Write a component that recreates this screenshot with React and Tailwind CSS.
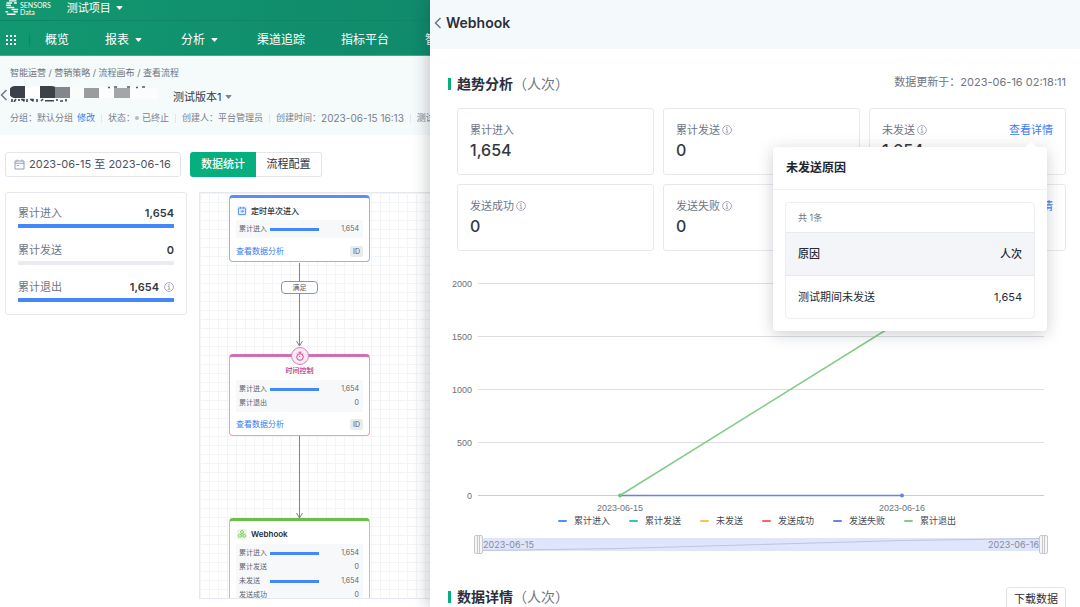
import React from "react";

function Caret({ className }) {
  return (
    <svg viewBox="0 0 8 5" className={`h-[4px] w-[7px] shrink-0 ${className}`} fill="currentColor" aria-hidden="true">
      <path d="M1 0h6c.7 0 .9.5.5 1L4.6 4.4c-.4.4-.8.4-1.2 0L.5 1C.1.5.3 0 1 0z" />
    </svg>
  );
}

function Chevron({ className }) {
  return (
    <svg viewBox="0 0 8 12" className={`h-[12px] w-[8px] shrink-0 ${className}`} fill="none" stroke="currentColor" strokeWidth="1.5" aria-hidden="true">
      <path d="M6.5 1L1.5 6l5 5" />
    </svg>
  );
}

function Info() {
  return (
    <svg viewBox="0 0 20 20" className="h-[10px] w-[10px] shrink-0" fill="none" stroke="#8b92a1" strokeWidth="1.5" aria-hidden="true">
      <circle cx="10" cy="10" r="8.8" />
      <path d="M8 9h2.2v5.5M7.5 14.5h5" />
      <circle cx="10" cy="5.8" r="0.7" fill="#8b92a1" />
    </svg>
  );
}

function Logo() {
  return (
    <svg viewBox="0 0 14 16" className="h-[16px] w-[14px] shrink-0" fill="none" stroke="#fff" strokeLinecap="round" aria-hidden="true">
      <path d="M4.5 .9h6.500" strokeWidth="1.4" />
      <path d="M2 3h4.500M9.500 3h1.800" strokeWidth="1.4" />
      <path d="M1.500 5.200h3.800" strokeWidth="1.5" />
      <path d="M2.200 7.400h6.500" strokeWidth="1.5" />
      <path d="M7.200 9.600h5.300" strokeWidth="1.5" />
      <path d="M1 11.800h1.500M9 11.800h3.300" strokeWidth="1.5" />
      <path d="M2.500 14.200h7.500" strokeWidth="1.5" />
    </svg>
  );
}

const navItems = [
  { label: "概览" },
  { label: "报表", menu: true },
  { label: "分析", menu: true },
  { label: "渠道追踪" },
  { label: "指标平台" },
  { label: "智能运营" },
];

function TopBar() {
  return (
    <header className="bg-linear-to-r from-[#129870] from-0% to-[#108a6b] to-40% text-white">
      <div className="flex h-[21px] items-start border-b border-[#0f8667] pl-[5px]">
        <div className="flex items-center gap-px">
          <Logo />
          <div className="pt-px font-['Lato',sans-serif] text-[7px] leading-[7px]">
            <div>SENSORS</div>
            <div>Data</div>
          </div>
        </div>
        <button type="button" className="ml-[16px] flex items-center gap-[5px] text-[11px] leading-[16px]">
          测试项目
          <Caret />
        </button>
      </div>
      <nav className="flex h-[35px] items-center border-b border-[#3fae8b] pt-[4px] pl-[6px] text-[12px] whitespace-nowrap">
        <button type="button" aria-label="应用" className="grid grid-cols-3 gap-[2px]">
          {Array.from({ length: 9 }, (_, i) => (
            <span key={i} className="size-[2px] bg-white" />
          ))}
        </button>
        <span className="ml-[13px] h-[12px] w-px bg-[#0f8667]" />
        <div className="ml-[15px] flex gap-[36px]">
          {navItems.map((item) => (
            <a key={item.label} href="#" className="flex items-center gap-[6px]">
              {item.label}
              {item.menu && <Caret className="mr-[3px]" />}
            </a>
          ))}
        </div>
      </nav>
    </header>
  );
}

function MaskedName() {
  return (
    <svg viewBox="0 0 150 18" className="mb-[8px] h-[18px] w-[150px] shrink-0" aria-hidden="true">
      <path d="M6 2h10v12H4a6 6 0 0 1 2-12z" fill="#3c4048" />
      <rect x="15" y="2" width="15" height="12" fill="#fff" />
      <path d="M30 2h12l4 1v11H30z" fill="#3d4248" />
      <rect x="45" y="3" width="15" height="11" fill="#83868a" />
      <rect x="60" y="3" width="14" height="11" fill="#fbfbfb" />
      <rect x="74" y="4" width="15" height="10" fill="#9a9d9f" />
      <rect x="89" y="3" width="15" height="11" fill="#fdfdfd" />
      <rect x="104" y="4" width="16" height="10" fill="#a3a6a8" />
      <rect x="120" y="4" width="28" height="11" fill="#fbfdfd" />
      <path d="M2 15v3M6 15l-2 3M9 15v2M11 15.500h3v2M17 15v3M20 15.500h3v2M27 15v3M33 15l-2 2M35 16.800h9M47 15v2M50 17h3M56 15v2.500" stroke="#41464f" strokeWidth="1.6" />
      <path d="M98 3.500h2M104 3h3M117 3h3M126 3.500h2M132 3h3" stroke="#555a62" strokeWidth="1.400" />
    </svg>
  );
}

function Sep() {
  return <span className="mx-[6px] h-[9px] w-px bg-[#e3e7ec]" />;
}

function PageHeader() {
  return (
    <div className="bg-[#f5fafb] pt-[10px] pb-[10px] whitespace-nowrap">
      <div className="pl-[10px] text-[9px] leading-[14px] text-[#6b7280]">智能运营 / 营销策略 / 流程画布 / 查看流程</div>
      <div className="flex h-[27px] items-center pt-[7px]">
        <button type="button" aria-label="返回" className="mr-[2px] mb-[4px] text-[#6e778c]">
          <Chevron />
        </button>
        <MaskedName />
        <button type="button" className="ml-[13px] flex items-center gap-[4px] text-[11px] text-[#343a46]">
          测试版本1
          <Caret className="text-[#7d8699]" />
        </button>
      </div>
      <div className="mt-[4px] flex items-center pl-[10px] text-[9px] leading-[14px] text-[#7a808c]">
        分组：默认分组
        <a href="#" className="ml-[4px] text-[#3a7bf5]">修改</a>
        <Sep />
        状态：
        <span className="mr-[3px] size-[4px] rounded-full bg-[#b4bac6]" />
        已终止
        <Sep />
        创建人：平台管理员
        <Sep />
        创建时间：<span className="text-[10px]">2023-06-15 16:13</span>
        <Sep />
        测试时间：2023-06-15
      </div>
    </div>
  );
}

const totals = [
  { label: "累计进入", value: "1,654", bar: "bg-[#4288fc]" },
  { label: "累计发送", value: "0", bar: "bg-[#ebecf0]" },
  { label: "累计退出", value: "1,654", bar: "bg-[#4288fc]", info: true },
];

function Totals() {
  return (
    <section className="flex w-[182px] shrink-0 flex-col gap-[14px] self-start rounded-[3px] border border-[#e6e8ef] px-[12px] pt-[12px] pb-[12px]">
      {totals.map((t) => (
        <div key={t.label}>
          <div className="flex items-center leading-[16px]">
            <span className="flex-1 text-[11px] text-[#6f7683]">{t.label}</span>
            <span className="text-[11px] font-semibold text-[#333842]">{t.value}</span>
            {t.info && (
              <span className="ml-[5px]">
                <Info />
              </span>
            )}
          </div>
          <div className={`mt-[3px] h-[4px] ${t.bar}`} />
        </div>
      ))}
    </section>
  );
}

function NodeRows({ rows }) {
  return (
    <div className="bg-[#f7f8fa] px-[3px] py-[2px]">
      {rows.map(([label, value, filled]) => (
        <div key={label} className="flex h-[14px] items-center text-[7px] text-[#5e6470]">
          <span className="w-[31px]">{label}</span>
          {filled && <span className="h-[3px] w-[49px] bg-[#4288fc]" />}
          <span className="flex-1 pr-px text-right">{value}</span>
        </div>
      ))}
    </div>
  );
}

function NodeFoot() {
  return (
    <div className="flex items-center justify-between">
      <a href="#" className="text-[8px] leading-[12px] text-[#3a7bf5]">查看数据分析</a>
      <span className="rounded-[2px] bg-[#e9ebef] px-[3px] text-[7px] leading-[11px] text-[#4f5560]">ID</span>
    </div>
  );
}

function FlowCanvas() {
  return (
    <section className="relative h-[407px] flex-1 overflow-hidden border border-[#e6e8ef] bg-white bg-[linear-gradient(to_right,#f3f4f6_1px,transparent_1px),linear-gradient(to_bottom,#f3f4f6_1px,transparent_1px)] bg-size-[9px_9px]">
      <svg className="absolute top-0 left-[89px] h-full w-[20px]" viewBox="0 0 20 405" preserveAspectRatio="xMinYMin meet" fill="none" stroke="#7d828c" aria-hidden="true">
        <path d="M10.500 70v83M7.500 148l3 5 3-5M10.500 243v82M7.500 320l3 5 3-5" />
      </svg>
      <div className="absolute top-[88px] left-[81px] w-[37px] rounded-[4px] border border-[#8b93a6] bg-white text-center text-[7px] leading-[11px] text-[#4f5560]">满足</div>

      <article className="absolute top-[2px] left-[29px] w-[141px] rounded-[4px] border border-t-[3px] border-[#8fb5f8] border-t-[#5b8ff0] bg-white px-[6px] pb-[4px]">
        <h3 className="flex h-[22px] items-center gap-[4px] pt-[3px] pl-px text-[8px] font-medium text-[#272c36]">
          <svg viewBox="0 0 20 20" className="size-[10px]" fill="none" stroke="#3a7bf5" strokeWidth="1.5" aria-hidden="true">
            <rect width="20" height="20" rx="3" fill="#e4eefe" stroke="none" />
            <rect x="3" y="4" width="14" height="13" rx="1" />
            <path d="M7 2v3M13 2v3M7 10.500h6M10.500 8l2.500 2.500-2.500 2.500" />
          </svg>
          定时单次进入
        </h3>
        <NodeRows rows={[["累计进入", "1,654", true]]} />
        <div className="mt-[7px]">
          <NodeFoot />
        </div>
      </article>

      <article className="absolute top-[161px] left-[29px] w-[141px] rounded-[4px] border border-t-[3px] border-[#e0a3cd] border-t-[#d16fb4] bg-white px-[6px] pb-[5px]">
        <svg viewBox="0 0 20 20" className="absolute -top-[11px] left-[60px] size-[20px]" fill="none" stroke="#d8489f" aria-hidden="true">
          <circle cx="10" cy="10" r="8.500" fill="#fbe9f5" stroke="#d583bd" />
          <circle cx="10" cy="11" r="3.300" />
          <path d="M8.500 6.200h3M10 6.500v1.200M9 9.800l1.200 1.400M6.800 7.500l.8.700M13.200 7.500l-.8.700" />
        </svg>
        <h3 className="h-[23px] pt-[8px] text-center text-[7px] leading-[12px] font-medium text-[#b52a80]">时间控制</h3>
        <NodeRows rows={[["累计进入", "1,654", true], ["累计退出", "0", false]]} />
        <div className="mt-[6px]">
          <NodeFoot />
        </div>
      </article>

      <article className="absolute top-[325px] left-[29px] w-[141px] rounded-[4px] border border-t-[3px] border-[#a2d98a] border-t-[#6cc04a] bg-white px-[6px] pb-[5px]">
        <h3 className="flex h-[23px] items-center gap-[4px] pt-[3px] pl-px text-[8px] font-semibold text-[#272c36]">
          <svg viewBox="0 0 20 20" className="size-[10px]" fill="none" stroke="#6cc04a" strokeWidth="1.500" aria-hidden="true">
            <rect width="20" height="20" rx="3" fill="#e9f7e3" stroke="none" />
            <circle cx="10" cy="6" r="3" />
            <circle cx="5.500" cy="13.500" r="3" />
            <circle cx="14.500" cy="13.500" r="3" />
            <path d="M9 8.500l-2.500 4M11 8.500l2.500 4M8.500 14h4" />
          </svg>
          Webhook
        </h3>
        <NodeRows
          rows={[
            ["累计进入", "1,654", true],
            ["累计发送", "0", false],
            ["未发送", "1,654", true],
            ["发送成功", "0", false],
          ]}
        />
      </article>
    </section>
  );
}

function SectionTitle({ children }) {
  return (
    <h2 className="flex items-center text-[14px] leading-[20px] font-semibold text-[#2b303b]">
      <span className="mr-[6px] h-[12px] w-[3px] bg-[#06b07e]" />
      {children}
      <span className="font-normal text-[#6f7683]">（人次）</span>
    </h2>
  );
}

function ReasonPopover() {
  return (
    <div role="dialog" aria-label="未发送原因" className="absolute top-[38px] right-[18px] z-10 w-[274px] rounded-[4px] bg-white shadow-[0_3px_16px_rgba(30,35,50,0.22)]">
      <span className="absolute -top-[4px] right-[12px] size-[8px] rotate-45 bg-white" />
      <h3 className="border-b border-[#eff1f4] px-[13px] py-[11px] text-[12px] leading-[20px] font-semibold text-[#22262f]">未发送原因</h3>
      <div className="p-[12px]">
        <div className="rounded-[4px] border border-[#eceef2]">
          <p className="px-[12px] text-[9px] leading-[29px] text-[#6f7683]">共 1条</p>
          <table className="w-full text-[11px] text-[#272c36]">
            <thead>
              <tr className="h-[43px] border-y border-[#e8eaf0] bg-[#f4f5f9]">
                <th className="px-[12px] text-left font-medium">原因</th>
                <th className="px-[12px] text-right font-medium">人次</th>
              </tr>
            </thead>
            <tbody>
              <tr className="h-[42px]">
                <td className="px-[12px]">测试期间未发送</td>
                <td className="px-[12px] text-right">1,654</td>
              </tr>
            </tbody>
          </table>
        </div>
      </div>
    </div>
  );
}

const stats = [
  { label: "累计进入", value: "1,654" },
  { label: "累计发送", value: "0", info: true },
  { label: "未发送", value: "1,654", info: true, link: true, popover: true },
  { label: "发送成功", value: "0", info: true },
  { label: "发送失败", value: "0", info: true },
  { label: "累计退出", value: "1,654", info: true, link: true },
];

function StatCard({ stat }) {
  return (
    <div className="relative rounded-[3px] border border-[#e6e8ec] px-[12px] pt-[13px] pb-[12px]">
      <div className="flex items-center gap-[2px] text-[11px] leading-[16px] text-[#6f7683]">
        {stat.label}
        {stat.info && <Info />}
        {stat.link && <a href="#" className="ml-auto text-[#3a7bf5]">查看详情</a>}
      </div>
      <div className="text-[16px] leading-[24px] font-medium text-[#333842]">{stat.value}</div>
      {stat.popover && <ReasonPopover />}
    </div>
  );
}

const series = [
  ["累计进入", "bg-[#4b8ffb]"],
  ["累计发送", "bg-[#2bcbb8]"],
  ["未发送", "bg-[#fcbd5e]"],
  ["发送成功", "bg-[#fb6464]"],
  ["发送失败", "bg-[#6f7ee8]"],
  ["累计退出", "bg-[#84cb86]"],
];

function TrendChart() {
  const ticks = [2000, 1500, 1000, 500, 0];
  return (
    <figure>
      <svg viewBox="0 0 650 245" className="block w-full font-['Liberation_Sans',sans-serif]" role="img" aria-label="趋势分析">
        {ticks.map((t, i) => (
          <g key={t}>
            <path d={`M48 ${15.5 + i * 53}H614`} stroke={t === 0 ? "#c9cbd0" : "#dcdee2"} />
            <text x="42" y={19 + i * 53} textAnchor="end" fontSize="9" fill="#6e7079">{t}</text>
          </g>
        ))}
        <path d="M190 227.500H472" stroke="#6f7ee8" strokeWidth="1.500" />
        <path d="M190 227.500L472 52" stroke="#84cb86" strokeWidth="1.500" />
        <circle cx="472" cy="227.500" r="2" fill="#6f7ee8" />
        <circle cx="190" cy="227.500" r="2" fill="#6fc47a" />
        <text x="190" y="242.500" textAnchor="middle" fontSize="9" fill="#6e7079">2023-06-15</text>
        <text x="472" y="242.500" textAnchor="middle" fontSize="9" fill="#6e7079">2023-06-16</text>
      </svg>
      <figcaption className="flex justify-center gap-[19px] pt-px pl-[4px] text-[9px] leading-[14px] text-[#454a54]">
        {series.map(([label, color]) => (
          <span key={label} className="flex items-center gap-[7px]">
            <i className={`h-[2px] w-[9px] rounded-[1px] ${color}`} />
            {label}
          </span>
        ))}
      </figcaption>
    </figure>
  );
}

const thumb =
  "pointer-events-none absolute inset-0 w-full appearance-none bg-transparent [&::-webkit-slider-thumb]:pointer-events-auto [&::-webkit-slider-thumb]:h-[19px] [&::-webkit-slider-thumb]:w-[9px] [&::-webkit-slider-thumb]:appearance-none [&::-webkit-slider-thumb]:rounded-[2px] [&::-webkit-slider-thumb]:border [&::-webkit-slider-thumb]:border-[#c6c8cd] [&::-webkit-slider-thumb]:bg-[#f6f6f6] [&::-webkit-slider-thumb]:bg-[linear-gradient(to_right,transparent_2px,#c6c8cd_2px,#c6c8cd_3px,transparent_3px,transparent_4px,#c6c8cd_4px,#c6c8cd_5px,transparent_5px)]";

function RangeZoom() {
  return (
    <div className="relative mt-[7px] mr-[32px] ml-[44px] h-[19px] px-[4px] py-[3px]">
      <div className="relative flex h-[13px] items-center justify-between bg-[#dfe5fa] px-[5px] text-[9px] text-[#868b9b]">
        <svg viewBox="0 0 566 13" preserveAspectRatio="none" className="absolute inset-0 h-full w-full" fill="none" stroke="#bcc5dd" aria-hidden="true">
          <path d="M4 12.500L142 10.500L424 2.500L562 .5" />
        </svg>
        <span>2023-06-15</span>
        <span>2023-06-16</span>
      </div>
      <input type="range" aria-label="开始日期" min="0" max="100" defaultValue="0" className={thumb} />
      <input type="range" aria-label="结束日期" min="0" max="100" defaultValue="100" className={thumb} />
    </div>
  );
}

function Drawer() {
  return (
    <aside className="absolute inset-y-0 right-0 left-[430px] overflow-hidden bg-white shadow-[-3px_0_14px_rgba(20,30,40,0.22)]">
      <header className="flex h-[49px] items-center gap-[4px] bg-[#f4fafb] pb-[4px] pl-[4px]">
        <button type="button" aria-label="返回" className="text-[#6e778c]">
          <Chevron />
        </button>
        <h1 className="text-[14px] font-semibold text-[#2b303b]">Webhook</h1>
      </header>
      <div className="flex items-center justify-between pt-[25px] pr-[14px] pl-[18px]">
        <SectionTitle>趋势分析</SectionTitle>
        <span className="pb-[3px] text-[11px] text-[#6f7683]">数据更新于：2023-06-16 02:18:11</span>
      </div>
      <div className="grid grid-cols-3 gap-x-[9px] gap-y-[9px] pt-[14px] pr-[14px] pl-[27px]">
        {stats.map((s) => (
          <StatCard key={s.label} stat={s} />
        ))}
      </div>
      <div className="pt-[17px]">
        <TrendChart />
        <RangeZoom />
      </div>
      <div className="flex items-start justify-between pt-[33px] pr-[14px] pl-[18px]">
        <SectionTitle>数据详情</SectionTitle>
        <button type="button" className="h-[24px] rounded-[3px] border border-[#dfe2e8] px-[7px] text-[11px] text-[#2b303b]">下载数据</button>
      </div>
    </aside>
  );
}

export default function App() {
  return (
    <div className="relative h-screen overflow-hidden bg-white font-['Inter','Noto_Sans_CJK_SC',sans-serif]">
      <TopBar />
      <PageHeader />
      <main>
        <div className="flex gap-[9px] pt-[17px] pl-[5px]">
          <button type="button" className="flex h-[25px] w-[176px] items-center gap-[4px] rounded-[3px] border border-[#e2e5ee] pl-[8px] text-[11px] whitespace-nowrap text-[#4b5261]">
            <svg viewBox="0 0 22 22" className="size-[11px] shrink-0" fill="none" stroke="#8f9db8" strokeWidth="2" aria-hidden="true">
              <path d="M2 4h18v16H2zM2 8.500h18M6 1v4M16 1v4M5.500 13h4" />
            </svg>
            2023-06-15 至 2023-06-16
          </button>
          <div className="flex h-[25px] text-[11px]">
            <button type="button" className="w-[66px] rounded-l-[3px] bg-[#06b07e] font-medium text-white">数据统计</button>
            <button type="button" className="w-[66px] rounded-r-[3px] border border-l-0 border-[#e2e5ee] text-[#2b303b]">流程配置</button>
          </div>
        </div>
        <div className="flex gap-[12px] pt-[15px] pl-[5px]">
          <Totals />
          <FlowCanvas />
        </div>
      </main>
      <Drawer />
    </div>
  );
}
